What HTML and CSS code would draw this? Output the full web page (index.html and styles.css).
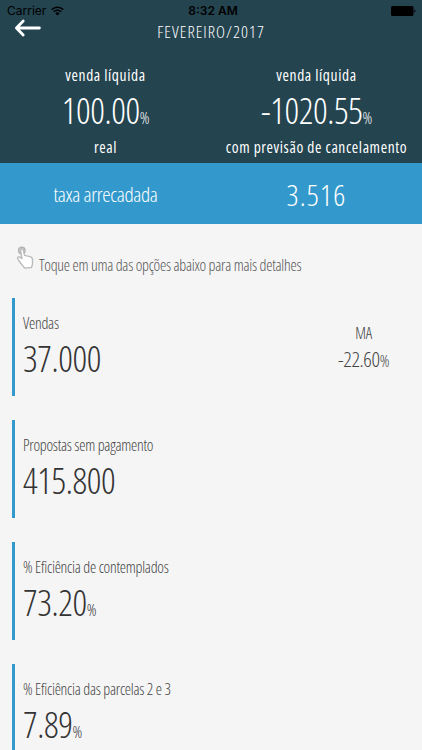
FILE: index.html
```html
<!DOCTYPE html>
<html lang="pt-BR">
<head>
    <meta charset="UTF-8">
    <meta name="viewport" content="width=device-width, initial-scale=1.0">
    <title>Fevereiro/2017</title>
    <link rel="stylesheet" href="styles.css">
</head>
<body>
    <header class="header">
        <div class="status-bar">
            <div class="carrier">
                <span>Carrier</span>
                <svg width="13" height="10" viewBox="0 0 13 10" fill="none" stroke="#000" stroke-width="1.6">
                    <path d="M0.8 3.6a8.2 8.2 0 0 1 11.4 0M2.8 5.8a5.3 5.3 0 0 1 7.4 0"/>
                    <path d="M6.5 9.6L4.4 7.4a3 3 0 0 1 4.2 0z" fill="#000" stroke="none"/>
                </svg>
            </div>
            <span class="clock">8:32 AM</span>
            <svg class="battery" width="25" height="10" viewBox="0 0 25 10">
                <rect width="22.5" height="10" rx="1.5"/>
                <path d="M23.3 3.3a1.8 1.8 0 0 1 0 3.4z"/>
            </svg>
        </div>
        <div class="nav">
            <svg class="back" width="28" height="18" viewBox="0 0 28 18" fill="none" stroke="#fff" stroke-width="2.8" stroke-linecap="round" stroke-linejoin="round">
                <path d="M9.2 2L2.4 9l6.8 7M3 9h22.4"/>
            </svg>
            <h1 class="title">FEVEREIRO/2017</h1>
        </div>
        <div class="totals">
            <div class="total">
                <p class="total-label">venda líquida</p>
                <p class="total-value">100.00<small>%</small></p>
                <p class="total-label">real</p>
            </div>
            <div class="total">
                <p class="total-label">venda líquida</p>
                <p class="total-value">-1020.55<small>%</small></p>
                <p class="total-label">com previsão de cancelamento</p>
            </div>
        </div>
    </header>

    <div class="rate">
        <span class="rate-label">taxa arrecadada</span>
        <span class="rate-value">3.516</span>
    </div>

    <main class="content">
        <div class="hint">
            <svg class="hand" width="18" height="24" viewBox="0 0 18 24">
                <circle cx="5.8" cy="4.4" r="3.2" fill="#ddd" stroke="#b4b4b4" stroke-width="1.5"/>
                <path d="M4.6 4.4c0-1.8 2.5-1.8 2.8-.2l1.1 5.2 5.4 1.2c1.6.4 2.6 1.5 2.6 3.1v4c0 1.4-.8 2-1 3.8l-7 .6c-1.2-2.6-3.6-4-5.3-7-.9-1.6-2-2.4-1.5-3.6.6-1.2 2.4-.6 4.2 1z" fill="#fff" stroke="#bbb" stroke-width="1.4" stroke-linejoin="round"/>
            </svg>
            <p>Toque em uma das opções abaixo para mais detalhes</p>
        </div>

        <section class="item">
            <div>
                <h2 class="item-label">Vendas</h2>
                <p class="item-value">37.000</p>
            </div>
            <div class="average">
                <p class="average-label">MA</p>
                <p class="average-value">-22.60<small>%</small></p>
            </div>
        </section>
        <section class="item">
            <div>
                <h2 class="item-label">Propostas sem pagamento</h2>
                <p class="item-value">415.800</p>
            </div>
        </section>
        <section class="item">
            <div>
                <h2 class="item-label">% Eficiência de contemplados</h2>
                <p class="item-value">73.20<small>%</small></p>
            </div>
        </section>
        <section class="item">
            <div>
                <h2 class="item-label">% Eficiência das parcelas 2 e 3</h2>
                <p class="item-value">7.89<small>%</small></p>
            </div>
        </section>
    </main>
</body>
</html>
```
FILE: styles.css
```css
* {
    box-sizing: border-box;
    margin: 0;
    padding: 0;
}
body {
    height: 750px;
    overflow: hidden;
    background-color: #f5f5f5;
    color: #333;
    font-family: "Open Sans", sans-serif;
    font-stretch: 75%;
    font-weight: 300;
}
h1, h2 {
    font-weight: 300;
}
small {
    font-size: 16px;
    line-height: 1;
}

/* header */
.header {
    height: 163px;
    background-color: #244450;
    color: #fff;
}
.status-bar {
    display: grid;
    grid-template-columns: 1fr auto 1fr;
    align-items: center;
    height: 21px;
    padding: 0 6px 0 7px;
    color: #000;
    font-family: Inter, sans-serif;
    font-stretch: normal;
    font-size: 12px;
    font-weight: 400;
}
.carrier {
    display: flex;
    align-items: center;
    gap: 5px;
}
.clock {
    padding-left: 3px;
    font-weight: 600;
}
.battery {
    justify-self: end;
}
.nav {
    display: grid;
    grid-template-columns: 42px 1fr 42px;
    height: 38px;
}
.back {
    margin: -2px 0 0 14px;
}
.title {
    font-size: 17px;
    font-weight: 350;
    line-height: 21px;
    letter-spacing: 1.05px;
    text-align: center;
}
.totals {
    display: grid;
    grid-template-columns: 1fr 1fr;
    padding-top: 5px;
    text-align: center;
}
.total-label {
    font-size: 15.5px;
    font-weight: 370;
    line-height: 22px;
    letter-spacing: 0.6px;
    white-space: nowrap;
}
.total-value {
    font-size: 36px;
    line-height: 50px;
    letter-spacing: -0.4px;
}

/* blue strip */
.rate {
    display: grid;
    grid-template-columns: 1fr 1fr;
    align-items: center;
    height: 61px;
    background-color: #3399cc;
    color: #fff;
    text-align: center;
}
.rate-label {
    padding-top: 1px;
    font-size: 21px;
    letter-spacing: -0.35px;
}
.rate-value {
    padding-top: 1px;
    font-size: 29.5px;
    font-weight: 350;
    letter-spacing: 1.2px;
}

/* list */
.content {
    padding: 22px 12px 0;
}
.hint {
    display: flex;
    height: 52px;
    padding-left: 4px;
    gap: 5px;
    color: #555;
    font-size: 15.8px;
    line-height: 38px;
    letter-spacing: -0.26px;
}
.item {
    display: flex;
    justify-content: space-between;
    height: 98px;
    margin-bottom: 24px;
    padding: 15px 21px 0 8px;
    border-left: 3px solid #3399cc;
}
.item-label {
    color: #444;
    font-size: 15.8px;
    line-height: 21px;
    letter-spacing: -0.25px;
}
.item-value {
    font-size: 36px;
    line-height: 50px;
    letter-spacing: -0.4px;
}
.average {
    padding-top: 9px;
    color: #444;
    text-align: center;
}
.average-label {
    font-size: 15.8px;
    line-height: 23px;
    letter-spacing: -0.3px;
}
.average-value {
    font-size: 21px;
    line-height: 28px;
    letter-spacing: -0.4px;
}
```
